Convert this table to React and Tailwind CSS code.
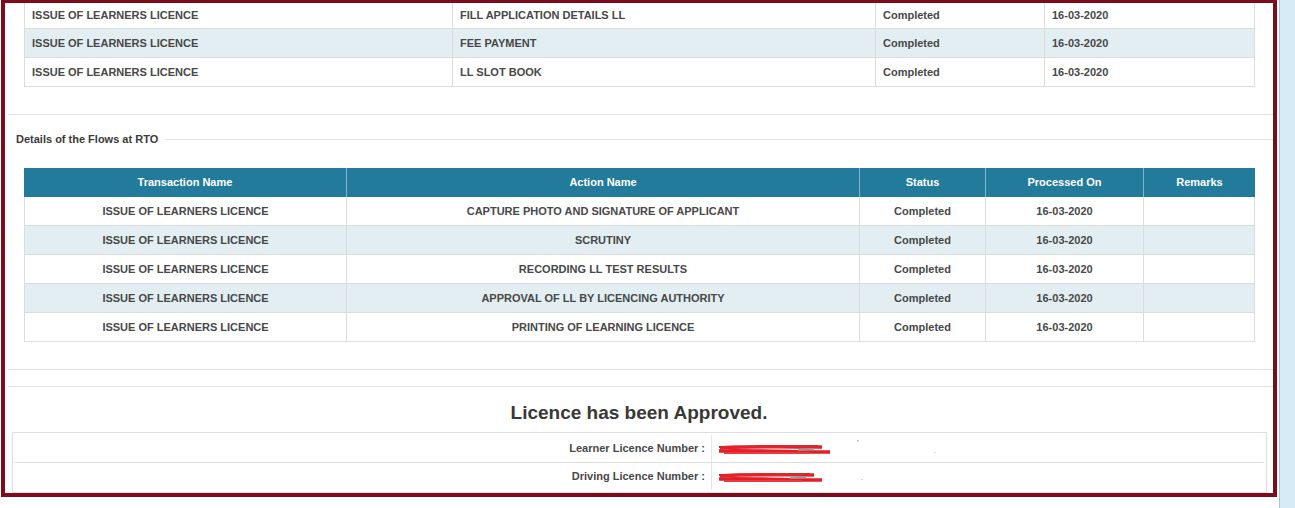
import React from 'react';

const llRows = [
  ['ISSUE OF LEARNERS LICENCE', 'FILL APPLICATION DETAILS LL', 'Completed', '16-03-2020'],
  ['ISSUE OF LEARNERS LICENCE', 'FEE PAYMENT', 'Completed', '16-03-2020'],
  ['ISSUE OF LEARNERS LICENCE', 'LL SLOT BOOK', 'Completed', '16-03-2020'],
];

const rtoRows = [
  ['ISSUE OF LEARNERS LICENCE', 'CAPTURE PHOTO AND SIGNATURE OF APPLICANT', 'Completed', '16-03-2020', ''],
  ['ISSUE OF LEARNERS LICENCE', 'SCRUTINY', 'Completed', '16-03-2020', ''],
  ['ISSUE OF LEARNERS LICENCE', 'RECORDING LL TEST RESULTS', 'Completed', '16-03-2020', ''],
  ['ISSUE OF LEARNERS LICENCE', 'APPROVAL OF LL BY LICENCING AUTHORITY', 'Completed', '16-03-2020', ''],
  ['ISSUE OF LEARNERS LICENCE', 'PRINTING OF LEARNING LICENCE', 'Completed', '16-03-2020', ''],
];

const llWidths = ['w-[429px]', 'w-[423px]', 'w-[169px]', 'w-[210px]'];
const rtoWidths = ['w-[323px]', 'w-[513px]', 'w-[126px]', 'w-[158px]', 'w-[111px]'];
const rtoHead = ['Transaction Name', 'Action Name', 'Status', 'Processed On', 'Remarks'];

function Scribble({ width }) {
  // red marker scribble hiding the licence number
  return (
    <svg width={width} height="14" viewBox={`0 0 ${width} 14`}>
      <path d={`M1 5 L${width - 12} 4`} stroke="#555" strokeWidth="2" />
      <path d={`M2 6 C30 4 ${width - 40} 5 ${width - 8} 5`} stroke="#e3232c" strokeWidth="3.5" fill="none" />
      <path d={`M1 9 C25 8 ${width - 30} 10 ${width} 10`} stroke="#e01f28" strokeWidth="3.5" fill="none" />
      <path d={`M6 11 L${width - 20} 11`} stroke="#ea3a40" strokeWidth="2" />
      <path d={`M${width - 32} 8 L${width - 16} 7`} stroke="#999" strokeWidth="2" />
    </svg>
  );
}

export default function App() {
  return (
    <div className="flex h-[508px] w-[1295px] overflow-hidden bg-white font-['Liberation_Sans',Arial,sans-serif] text-[11px] font-bold text-[#484848]">
      <div className="ml-px flex h-[497px] w-[1276px] shrink-0 flex-col border-x-4 border-t-[3px] border-b-4 border-[#7c0b1b]">
        {/* LL application flow table (cut off at top) */}
        <div className="pl-[19px]">
          <div className="w-[1231px]">
            {llRows.map((row, i) => (
              <div
                key={i}
                className={`flex border-b border-[#dcdcdc] ${i === 0 ? 'h-[26px]' : 'h-[29px]'} ${i === 1 ? 'bg-[#e2eef2]' : 'bg-white'}`}
              >
                {row.map((cell, j) => (
                  <div
                    key={j}
                    className={`${llWidths[j]} flex items-center border-r border-[#dcdcdc] pl-[7px] ${j === 0 ? 'border-l' : ''}`}
                  >
                    {cell}
                  </div>
                ))}
              </div>
            ))}
          </div>
        </div>

        <div className="ml-[3px] mt-[27px] h-px bg-[#e2e2e2]" />

        {/* Details of the Flows at RTO */}
        <div className="mt-[17px] flex h-[14px] items-center">
          <span className="ml-[11px] font-bold text-[#3a3a3a]">Details of the Flows at RTO</span>
          <div className="ml-[7px] h-px flex-1 bg-[#e2e2e2]" />
        </div>

        <div className="mt-[22px] pl-[19px]">
          <div className="w-[1231px]">
            <div className="flex h-[29px] bg-[#227b9b] text-white">
              {rtoHead.map((h, j) => (
                <div
                  key={j}
                  className={`${rtoWidths[j]} flex items-center justify-center ${j < 4 ? 'border-r border-[#7fb6cc]' : ''}`}
                >
                  {h}
                </div>
              ))}
            </div>
            {rtoRows.map((row, i) => (
              <div
                key={i}
                className={`flex h-[29px] border-b border-[#dcdcdc] ${i % 2 === 1 ? 'bg-[#e2eef2]' : 'bg-white'}`}
              >
                {row.map((cell, j) => (
                  <div
                    key={j}
                    className={`${rtoWidths[j]} flex items-center justify-center border-r border-[#dcdcdc] ${j === 0 ? 'border-l' : ''}`}
                  >
                    {cell}
                  </div>
                ))}
              </div>
            ))}
          </div>
        </div>

        <div className="ml-[3px] mt-[27px] h-px bg-[#e2e2e2]" />
        <div className="ml-[3px] mt-[16px] h-px bg-[#e2e2e2]" />

        <h2 className="mt-[15px] text-center text-[19px] leading-[22px] font-bold text-[#383838]">
          Licence has been Approved.
        </h2>

        {/* Licence numbers */}
        <div className="mt-[8px] pl-[7px]">
          <div className="w-[1255px] border border-[#dedede] p-[2px]">
            <div className="flex h-[28px] border-b border-[#dedede]">
              <div className="flex w-[697px] items-center justify-end border-r border-[#e6e6e6] pr-[6px]">
                Learner Licence Number :
              </div>
              <div className="relative flex flex-1 items-center pl-[6px]">
                <Scribble width={112} />
                <span className="absolute left-[145px] top-[2px] text-[8px] text-[#999]">'</span>
                <span className="absolute left-[222px] top-[12px] text-[6px] text-[#999]">.</span>
              </div>
            </div>
            <div className="flex h-[27px]">
              <div className="flex w-[697px] items-center justify-end border-r border-[#e6e6e6] pr-[6px]">
                Driving Licence Number :
              </div>
              <div className="relative flex flex-1 items-center pl-[6px]">
                <Scribble width={104} />
                <span className="absolute left-[149px] top-[11px] text-[6px] text-[#999]">.</span>
              </div>
            </div>
          </div>
        </div>
      </div>
      <div className="ml-[2px] w-px bg-[#9fc8de]" />
      <div className="flex-1 bg-[#d7ebf6]" />
    </div>
  );
}
